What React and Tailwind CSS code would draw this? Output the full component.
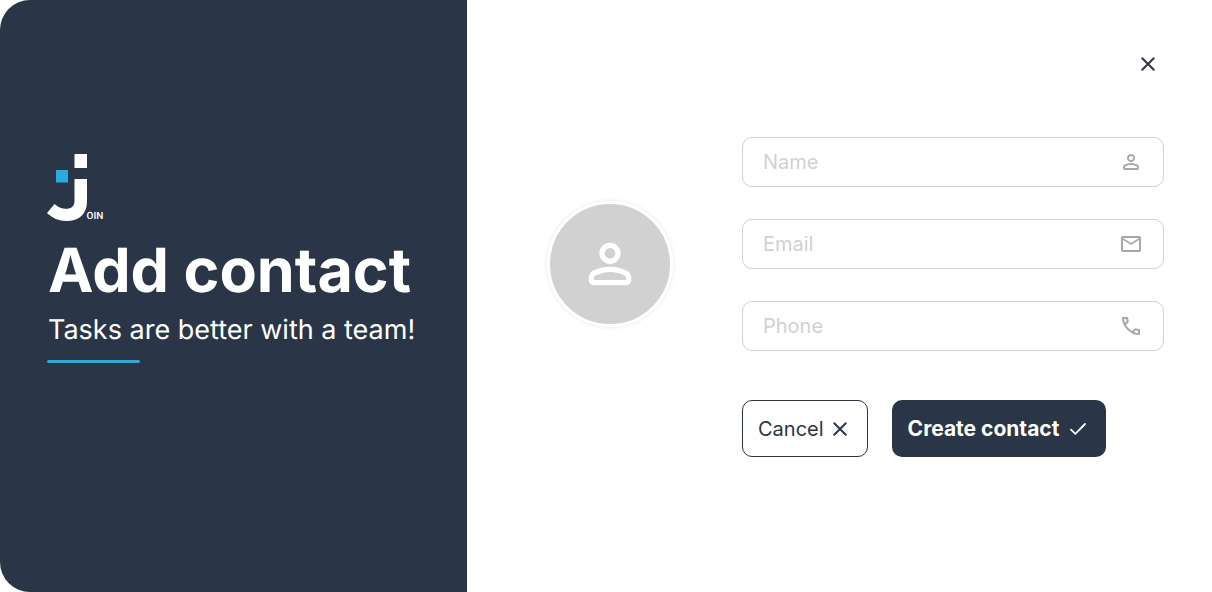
import React from "react";

function PersonIcon({ className }) {
  return (
    <svg viewBox="0 0 24 24" fill="currentColor" className={className} aria-hidden="true">
      <path d="M12 12q-1.65 0-2.825-1.175T8 8t1.175-2.825T12 4t2.825 1.175T16 8t-1.175 2.825T12 12m-8 6v-.8q0-.85.438-1.562T5.6 14.55q1.55-.775 3.15-1.162T12 13t3.25.388t3.15 1.162q.725.375 1.163 1.088T20 17.2v.8q0 .825-.587 1.413T18 20H6q-.825 0-1.412-.587T4 18m2 0h12v-.8q0-.275-.137-.5t-.363-.35q-1.35-.675-2.725-1.012T12 15t-2.775.338T6.5 16.35q-.225.125-.363.35T6 17.2zm6-8q.825 0 1.413-.587T14 8t-.587-1.412T12 6t-1.412.588T10 8t.588 1.413T12 10" />
    </svg>
  );
}

function MailIcon({ className }) {
  return (
    <svg viewBox="0 0 24 24" fill="currentColor" className={className} aria-hidden="true">
      <path d="M4 20q-.825 0-1.412-.587T2 18V6q0-.825.588-1.412T4 4h16q.825 0 1.413.588T22 6v12q0 .825-.587 1.413T20 20zm8-7L4 8v10h16V8zm0-2l8-5H4zM4 8V6v12z" />
    </svg>
  );
}

function PhoneIcon({ className }) {
  return (
    <svg viewBox="0 0 24 24" fill="currentColor" className={className} aria-hidden="true">
      <path d="M19.95 21q-3.125 0-6.175-1.362t-5.55-3.863t-3.862-5.55T3 4.05q0-.45.3-.75t.75-.3H8.1q.35 0 .625.238t.325.562l.65 3.5q.05.4-.025.675T9.4 8.45L6.975 10.9q.5.925 1.187 1.787t1.513 1.663q.775.775 1.625 1.438T13.1 17l2.35-2.35q.225-.225.588-.337t.712-.063l3.45.7q.35.1.575.363T21 15.9v4.05q0 .45-.3.75t-.75.3M6.025 9l1.65-1.65L7.25 5H5.025q.125 1.025.35 2.025T6.025 9m8.95 8.95q.975.425 1.988.675T19 18.95v-2.2l-2.35-.475z" />
    </svg>
  );
}

function CloseIcon({ className }) {
  return (
    <svg viewBox="0 0 24 24" fill="none" stroke="currentColor" strokeWidth="2" strokeLinecap="round" className={className} aria-hidden="true">
      <path d="M6.25 6.25l11.5 11.5M17.75 6.25l-11.5 11.5" />
    </svg>
  );
}

function CheckIcon({ className }) {
  return (
    <svg viewBox="0 0 24 24" fill="none" stroke="currentColor" strokeWidth="1.8" strokeLinecap="round" strokeLinejoin="round" className={className} aria-hidden="true">
      <path d="M5 12.700l4.300 4.200L19 7" />
    </svg>
  );
}

function Logo() {
  return (
    <svg viewBox="0 0 60 68" className="block h-[68px] w-[60px]" role="img" aria-label="Join">
      <path fill="#fff" d="M27.500 0H40v14H27.500zM27.500 25H40v22.500c0 12.500-8 19.500-20.500 19.500-8 0-14-3-19.500-8l7.500-9c4 3.500 7.500 4.800 11.500 4.800 5.500 0 8.500-2.500 8.500-8z" />
      <path fill="#29abe2" d="M9 16h12v12.500H9z" />
      <text x="39.500" y="65" fill="#fff" fontSize="10" fontWeight="500" fontFamily="Roboto, sans-serif" textRendering="geometricPrecision">OIN</text>
    </svg>
  );
}

const fields = [
  { id: "name", label: "Name", type: "text", Icon: PersonIcon },
  { id: "email", label: "Email", type: "email", Icon: MailIcon },
  { id: "phone", label: "Phone", type: "tel", Icon: PhoneIcon },
];

function Field({ id, label, type, Icon }) {
  return (
    <div className="flex h-[50px] items-center rounded-[10px] border border-[#d1d1d1] bg-white px-5">
      <input
        id={id}
        type={type}
        aria-label={label}
        placeholder={label}
        className="h-full min-w-0 flex-1 bg-transparent text-xl text-[#2a3647] outline-none placeholder:text-[#d1d1d1]"
      />
      <Icon className="size-6 shrink-0 text-[#a8a8a8]" />
    </div>
  );
}

export default function App() {
  return (
    <main className="flex min-h-screen bg-white font-['Inter',sans-serif] text-[#2a3647] antialiased [text-rendering:geometricPrecision]">
      <section className="w-[467px] shrink-0 rounded-l-[30px] bg-[#2a3647] pt-[154px] pl-[47px] text-white">
        <Logo />
        <h1 className="mt-3 pl-px text-[61px] leading-[72px] font-bold whitespace-nowrap">Add contact</h1>
        <p className="mt-2 pl-px text-[27px] leading-8 whitespace-nowrap">Tasks are better with a team!</p>
        <div className="mt-3.5 h-[3px] w-[93px] rounded-full bg-[#29abe2]" />
      </section>

      <section className="flex min-w-0 flex-1 flex-col pr-12 pl-20">
        <div className="mt-[52px] flex justify-end pr-1">
          <button type="button" aria-label="Close" className="flex size-6 items-center justify-center">
            <CloseIcon className="size-6" />
          </button>
        </div>
        <div className="mt-[61px] flex items-start gap-[69px]">
          <div className="mt-16 flex size-[126px] shrink-0 items-center justify-center rounded-full border-[3px] border-white bg-[#d1d1d1] text-white shadow-[0_0_4px_rgba(0,0,0,0.1)]">
            <PersonIcon className="size-16" />
          </div>
          <form className="min-w-0 flex-1" onSubmit={(e) => e.preventDefault()}>
            <div className="flex flex-col gap-8">
              {fields.map((f) => (
                <Field key={f.id} {...f} />
              ))}
            </div>
            <div className="mt-[49px] flex gap-6">
              <button type="button" className="flex h-[57px] items-center gap-1 rounded-[10px] border border-[#2a3647] px-[15px] text-xl">
                Cancel
                <CloseIcon className="size-6" />
              </button>
              <button type="submit" className="flex h-[57px] items-center gap-[7px] rounded-[10px] bg-[#2a3647] px-4 text-[21px] font-bold whitespace-nowrap text-white">
                Create contact
                <CheckIcon className="size-6" />
              </button>
            </div>
          </form>
        </div>
      </section>
    </main>
  );
}
